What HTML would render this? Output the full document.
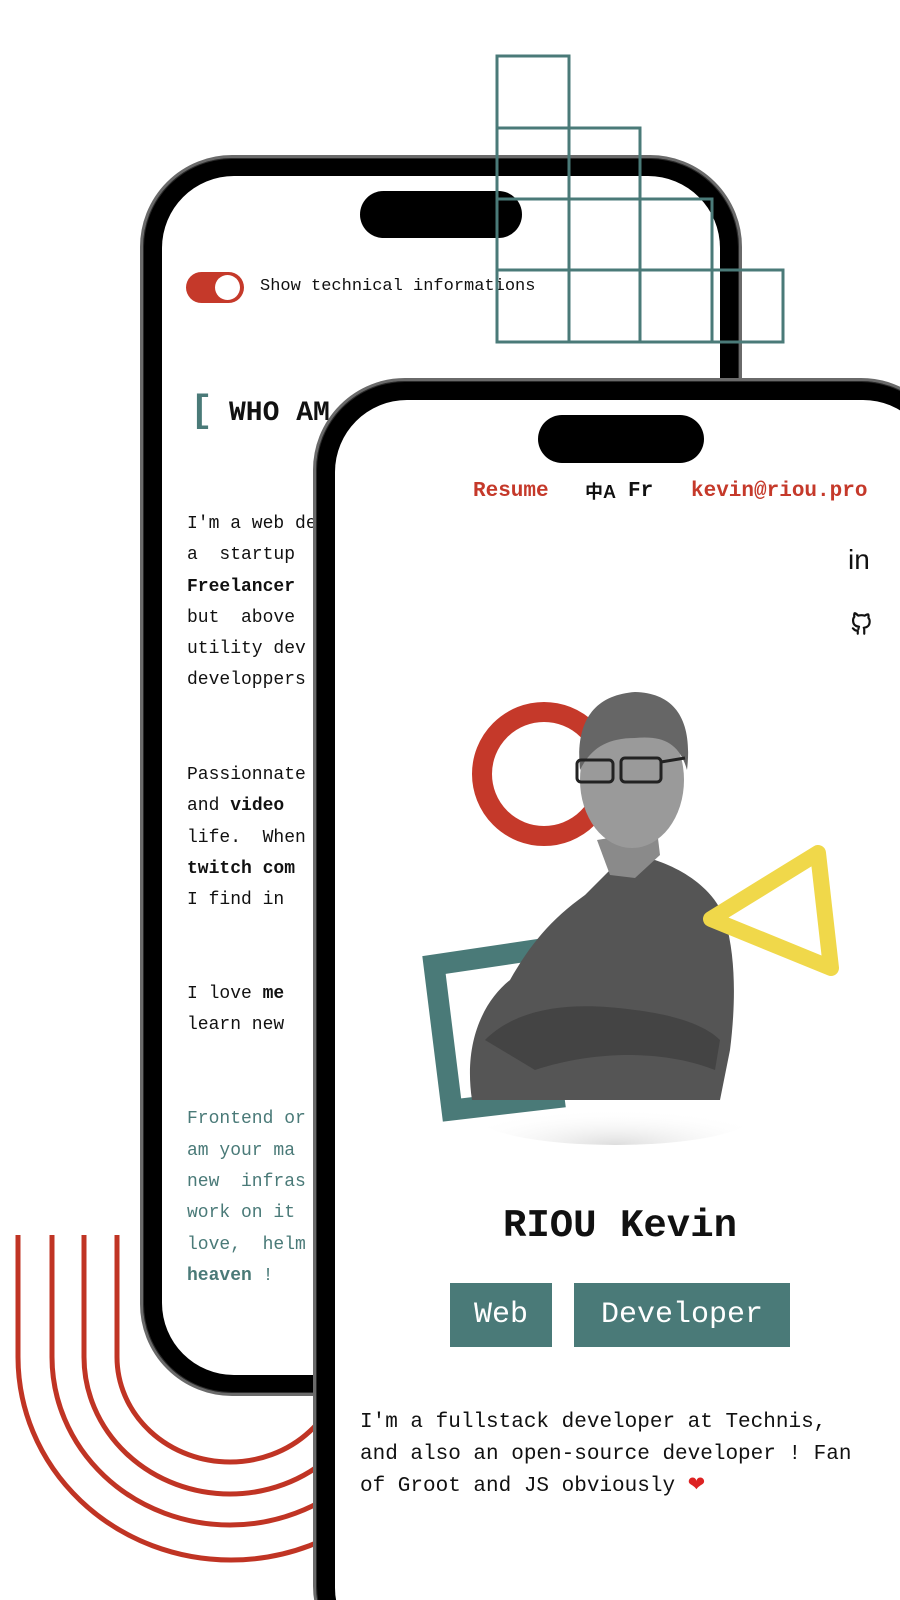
<!DOCTYPE html>
<html style="width:900px;height:1600px;overflow:hidden"><head><meta charset="utf-8"><style>
*{margin:0;padding:0;box-sizing:border-box}
body{width:900px;height:1600px;position:relative;overflow:hidden;background:#fff;font-family:"Liberation Mono",monospace;color:#111}
.abs{position:absolute}
.phone{position:absolute;background:#000;border:3px solid #6a6a6a;box-shadow:0 0 0 1px #2a2a2a inset}
.screen{position:absolute;background:#fff;overflow:hidden}
.island{position:absolute;background:#000;border-radius:30px}
.ln{position:absolute;left:25px;font-size:18px;white-space:pre;line-height:20px}
.t{color:#4a7a78}
b{font-weight:bold}
</style></head><body>
<svg class="abs" style="left:0;top:0" width="900" height="1600">
<g fill="none" stroke="#c03424" stroke-width="5">
<path d="M18 1235 V1357 A213 203 0 0 0 444 1357"/>
<path d="M52 1235 V1357 A178 168 0 0 0 408 1357"/>
<path d="M84 1235 V1357 A146 137 0 0 0 376 1357"/>
<path d="M117 1235 V1357 A113 105 0 0 0 343 1357"/>
</g></svg>

<div class="phone" style="left:140px;top:155px;width:602px;height:1241px;border-radius:92px">
 <div class="screen" style="left:19px;top:18px;width:558px;height:1199px;border-radius:72px">
  <div class="island" style="left:198px;top:15px;width:162px;height:47px"></div>
  <div class="abs" style="left:24px;top:96px;width:58px;height:31px;border-radius:16px;background:#c5392a"></div>
  <div class="abs" style="left:53px;top:99px;width:25px;height:25px;border-radius:50%;background:#fff"></div>
  <div class="abs" style="left:98px;top:101px;font-size:17px;white-space:pre">Show technical informations</div>
  <div class="abs" style="left:28px;top:214px;font-size:38px;color:#4a7a78;font-weight:bold">[</div>
  <div class="abs" style="left:67px;top:222px;font-size:28px;font-weight:bold">WHO AM I</div>
  <div class="ln" style="top:338px">I'm a web developer</div>
  <div class="ln" style="top:369px">a  startup</div>
  <div class="ln" style="top:401px"><b>Freelancer</b></div>
  <div class="ln" style="top:432px">but  above</div>
  <div class="ln" style="top:463px">utility dev</div>
  <div class="ln" style="top:494px">developpers</div>
  <div class="ln" style="top:589px">Passionnate</div>
  <div class="ln" style="top:620px">and <b>video</b></div>
  <div class="ln" style="top:652px">life.  When</div>
  <div class="ln" style="top:683px"><b>twitch com</b></div>
  <div class="ln" style="top:714px">I find in</div>
  <div class="ln" style="top:808px">I love <b>me</b></div>
  <div class="ln" style="top:839px">learn new</div>
  <div class="ln t" style="top:933px">Frontend or</div>
  <div class="ln t" style="top:965px">am your ma</div>
  <div class="ln t" style="top:996px">new  infras</div>
  <div class="ln t" style="top:1027px">work on it</div>
  <div class="ln t" style="top:1059px">love,  helm</div>
  <div class="ln t" style="top:1090px"><b>heaven</b> !</div>
 </div>
</div>

<svg class="abs" style="left:0;top:0" width="900" height="400">
<g fill="none" stroke="#4a7a78" stroke-width="3">
<rect x="497" y="56" width="72" height="286"/>
<rect x="497" y="128" width="143" height="214"/>
<rect x="497" y="199" width="215" height="143"/>
<rect x="497" y="270" width="286" height="72"/>
<line x1="569" y1="128" x2="569" y2="342"/>
<line x1="640" y1="199" x2="640" y2="342"/>
<line x1="712" y1="270" x2="712" y2="342"/>
</g></svg>

<div class="phone" style="left:313px;top:378px;width:640px;height:1300px;border-radius:92px">
 <div class="screen" style="left:19px;top:19px;width:600px;height:1260px;border-radius:72px">
  <div class="island" style="left:203px;top:15px;width:166px;height:48px"></div>
  <div class="abs" style="left:138px;top:80px;font-size:21px;font-weight:bold;color:#c5392a">Resume</div>
  <div class="abs" style="left:250px;top:78px;font-size:18px;font-weight:bold;font-family:'Noto Sans CJK SC',sans-serif">中<span style="font-family:'Liberation Sans';font-size:18px">A</span></div>
  <div class="abs" style="left:293px;top:80px;font-size:21px;font-weight:bold">Fr</div>
  <div class="abs" style="left:356px;top:80px;font-size:21px;font-weight:bold;color:#c5392a">kevin@riou.pro</div>
  <div class="abs" style="left:513px;top:144px;font-size:28px;font-family:'Liberation Sans',sans-serif">in</div>
  <svg class="abs" style="left:513px;top:211px" width="26" height="26" viewBox="0 0 24 24"><path d="M9 21v-3c-3 .6-3.5-1.5-4.5-2M15 21v-3.5c0-1 .1-1.4-.5-2 2.8-.3 5.5-1.4 5.5-6 0-1.2-.4-2.3-1.2-3.2.1-.3.5-1.6-.1-3.2 0 0-1-.3-3.3 1.2a11 11 0 0 0-6 0C7 1.8 6 2.1 6 2.1c-.6 1.6-.2 2.9-.1 3.2-.8.9-1.2 2-1.2 3.2 0 4.600 2.7 5.7 5.5 6-.6.6-.6 1.2-.5 2" fill="none" stroke="#111" stroke-width="2" stroke-linecap="round" stroke-linejoin="round"/></svg>
  <svg class="abs" style="left:0;top:0" width="600" height="800">
   <defs><radialGradient id="fd" cx="50%" cy="100%" r="60%"><stop offset="0" stop-color="#ddd"/><stop offset="1" stop-color="#fff" stop-opacity="0"/></radialGradient></defs>
   <circle cx="209" cy="374" r="62" fill="none" stroke="#c5392a" stroke-width="20"/>
   <polygon points="99,565 200,550 219,698 117,710" fill="none" stroke="#4a7a78" stroke-width="21"/>
   <ellipse cx="280" cy="715" rx="140" ry="30" fill="url(#fd)"/>
   <path d="M137 700 C128 640 150 600 175 580 C195 545 215 520 250 495 L275 470 L320 460 C350 470 380 490 390 520 C402 560 400 610 395 650 L385 700 Z" fill="#555"/>
   <path d="M150 640 C180 610 230 600 300 610 C340 615 370 625 385 640 L380 670 C330 650 260 650 200 670 Z" fill="#444"/>
   <path d="M262 440 L275 475 L300 478 L325 455 L322 430 Z" fill="#8a8a8a"/>
   <ellipse cx="297" cy="380" rx="52" ry="68" fill="#9a9a9a"/>
   <path d="M245 370 C240 320 260 295 300 292 C340 293 358 320 352 370 C345 345 330 335 300 338 C270 338 255 350 245 370Z" fill="#666"/>
   <rect x="242" y="360" width="36" height="22" rx="4" fill="none" stroke="#222" stroke-width="3"/>
   <rect x="286" y="358" width="40" height="24" rx="4" fill="none" stroke="#222" stroke-width="3"/>
   <path d="M326 362 L350 358" stroke="#222" stroke-width="3"/>
   <polygon points="483,453 376,519 496,568" fill="none" stroke="#f0d84a" stroke-width="16" stroke-linejoin="round"/>
  </svg>
  <div class="abs" style="left:0;width:600px;top:804px;text-align:center;font-size:39px;font-weight:bold;padding-right:30px">RIOU Kevin</div>
  <div class="abs" style="left:115px;top:883px;width:102px;height:64px;background:#4a7a78;color:#fff;font-size:30px;line-height:64px;text-align:center">Web</div>
  <div class="abs" style="left:239px;top:883px;width:216px;height:64px;background:#4a7a78;color:#fff;font-size:30px;line-height:64px;text-align:center">Developer</div>
  <div class="abs" style="left:25px;top:1007px;font-size:21px;line-height:32px;white-space:pre">I'm a fullstack developer at Technis,
and also an open-source developer ! Fan
of Groot and JS obviously <span style="color:#d22">&#10084;</span></div>
 </div>
</div>
</body></html>
